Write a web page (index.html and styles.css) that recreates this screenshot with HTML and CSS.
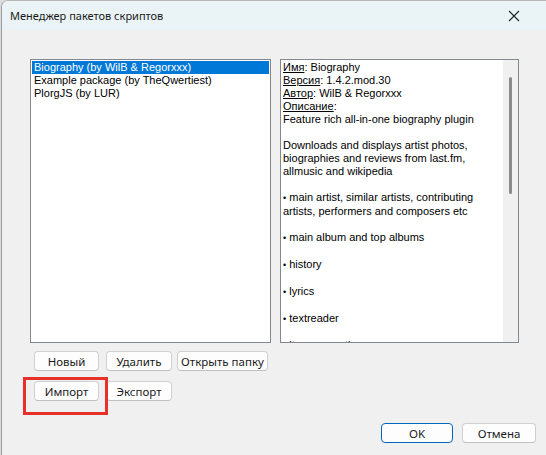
FILE: index.html
```html
<!DOCTYPE html>
<html lang="ru">
<head>
  <meta charset="UTF-8" />
  <title>Менеджер пакетов скриптов</title>
  <link rel="stylesheet" href="styles.css">
</head>
<body>
  <div class="window">
    <div class="titlebar">
      <span class="caption">Менеджер пакетов скриптов</span>
      <svg class="close" width="12" height="12" viewBox="0 0 12 12">
        <path d="M1 1 L11 11 M11 1 L1 11" stroke="#222" stroke-width="1.1" fill="none"/>
      </svg>
    </div>

    <div class="content">
      <div class="panes">
        <div class="listbox">
          <div class="item selected">Biography (by WilB &amp; Regorxxx)</div>
          <div class="item">Example package (by TheQwertiest)</div>
          <div class="item">PlorgJS (by LUR)</div>
        </div>

        <div class="infobox">
          <div class="info-text">
            <p><u>Имя</u>: Biography<br>
            <u>Версия</u>: 1.4.2.mod.30<br>
            <u>Автор</u>: WilB &amp; Regorxxx<br>
            <u>Описание</u>:<br>
            Feature rich all-in-one biography plugin</p>
            <p>Downloads and displays artist photos,<br>biographies and reviews from last.fm,<br>allmusic and wikipedia</p>
            <p><span class="dot">•</span> main artist, similar artists, contributing<br>artists, performers and composers etc</p>
            <p><span class="dot">•</span> main album and top albums</p>
            <p><span class="dot">•</span> history</p>
            <p><span class="dot">•</span> lyrics</p>
            <p><span class="dot">•</span> textreader</p>
            <p><span class="dot">•</span> item properties</p>
          </div>
          <div class="scrollbar"><div class="thumb"></div></div>
        </div>
      </div>

      <div class="btn-row first">
        <button class="btn w-new">Новый</button>
        <button class="btn w-del">Удалить</button>
        <button class="btn w-open">Открыть папку</button>
      </div>
      <div class="btn-row second">
        <span class="marked"><button class="btn w-new">Импорт</button></span>
        <button class="btn w-del">Экспорт</button>
      </div>

      <div class="dialog-buttons">
        <button class="btn default w-ok">OK</button>
        <button class="btn w-cancel">Отмена</button>
      </div>
    </div>
  </div>
</body>
</html>
```

FILE: styles.css
```css
* {
  margin: 0;
  padding: 0;
  box-sizing: border-box;
}
html, body {
  height: 100%;
  overflow: hidden;
  background: #dcdcdc;
}
.window {
  height: 455px;
  margin-left: 1px;
  border-left: 1px solid #9c9c9c;
  border-top: 1px solid #b8b8b8;
  border-top-left-radius: 7px;
  background: #f0f0f0;
  overflow: hidden;
  display: flex;
  flex-direction: column;
}
.titlebar {
  height: 29px;
  background: #eaf3f6;
  display: flex;
  align-items: center;
  justify-content: space-between;
  padding: 0 26px 0 8px;
  font-family: "Noto Sans", "Liberation Sans", sans-serif;
  font-size: 11px;
  color: #1a1a1a;
}
.close {
  display: block;
}
.content {
  flex: 1;
  display: flex;
  flex-direction: column;
  padding: 29px 10px 0 28px;
}
.panes {
  display: flex;
  gap: 9px;
  height: 284px;
}
.listbox, .infobox {
  border: 1px solid #828790;
  background: #fff;
  font-family: "Liberation Sans", Arial, sans-serif;
  font-size: 11px;
  color: #000;
}
.listbox {
  width: 241px;
  padding: 1px;
}
.item {
  height: 13px;
  line-height: 13px;
  padding-left: 2px;
  white-space: nowrap;
}
.item.selected {
  background: #0078d7;
  color: #fff;
}
.infobox {
  width: 239px;
  display: flex;
  overflow: hidden;
}
.info-text {
  flex: 1;
  padding: 1px 0 0 2px;
  line-height: 13px;
  white-space: nowrap;
  overflow: hidden;
}
.info-text p + p {
  margin-top: 13px;
}
.dot {
  font-size: 9px;
}
.scrollbar {
  width: 15px;
  background: #f0f0f0;
  padding: 17px 0 0 6px;
}
.thumb {
  width: 3px;
  height: 117px;
  border-radius: 2px;
  background: #8a8a8a;
}
.btn {
  height: 20px;
  border: 1px solid #d0d0d0;
  border-bottom-color: #c0c0c0;
  border-radius: 4px;
  background: #fdfdfd;
  font-family: "Noto Sans", "Liberation Sans", sans-serif;
  font-size: 11.5px;
  color: #1a1a1a;
}
.btn.default {
  border: 1px solid #0067c0;
}
.w-new { width: 65px; }
.w-del { width: 66px; }
.w-open { width: 91px; }
.w-ok { width: 72px; }
.w-cancel { width: 74px; }
.btn-row {
  display: flex;
  gap: 7px;
  padding-left: 4px;
}
.btn-row.first {
  margin-top: 8px;
}
.btn-row.first .w-open {
  margin-left: -2px;
}
.btn-row.second {
  margin-top: 10px;
}
.marked {
  position: relative;
  display: flex;
}
/* red frame drawn around the import button */
.marked::after {
  content: "";
  position: absolute;
  left: -11px;
  top: -4px;
  width: 79px;
  height: 32px;
  border: 3px solid #e8302a;
}
.dialog-buttons {
  display: flex;
  justify-content: flex-end;
  gap: 9px;
  margin-top: 22px;
}
```
